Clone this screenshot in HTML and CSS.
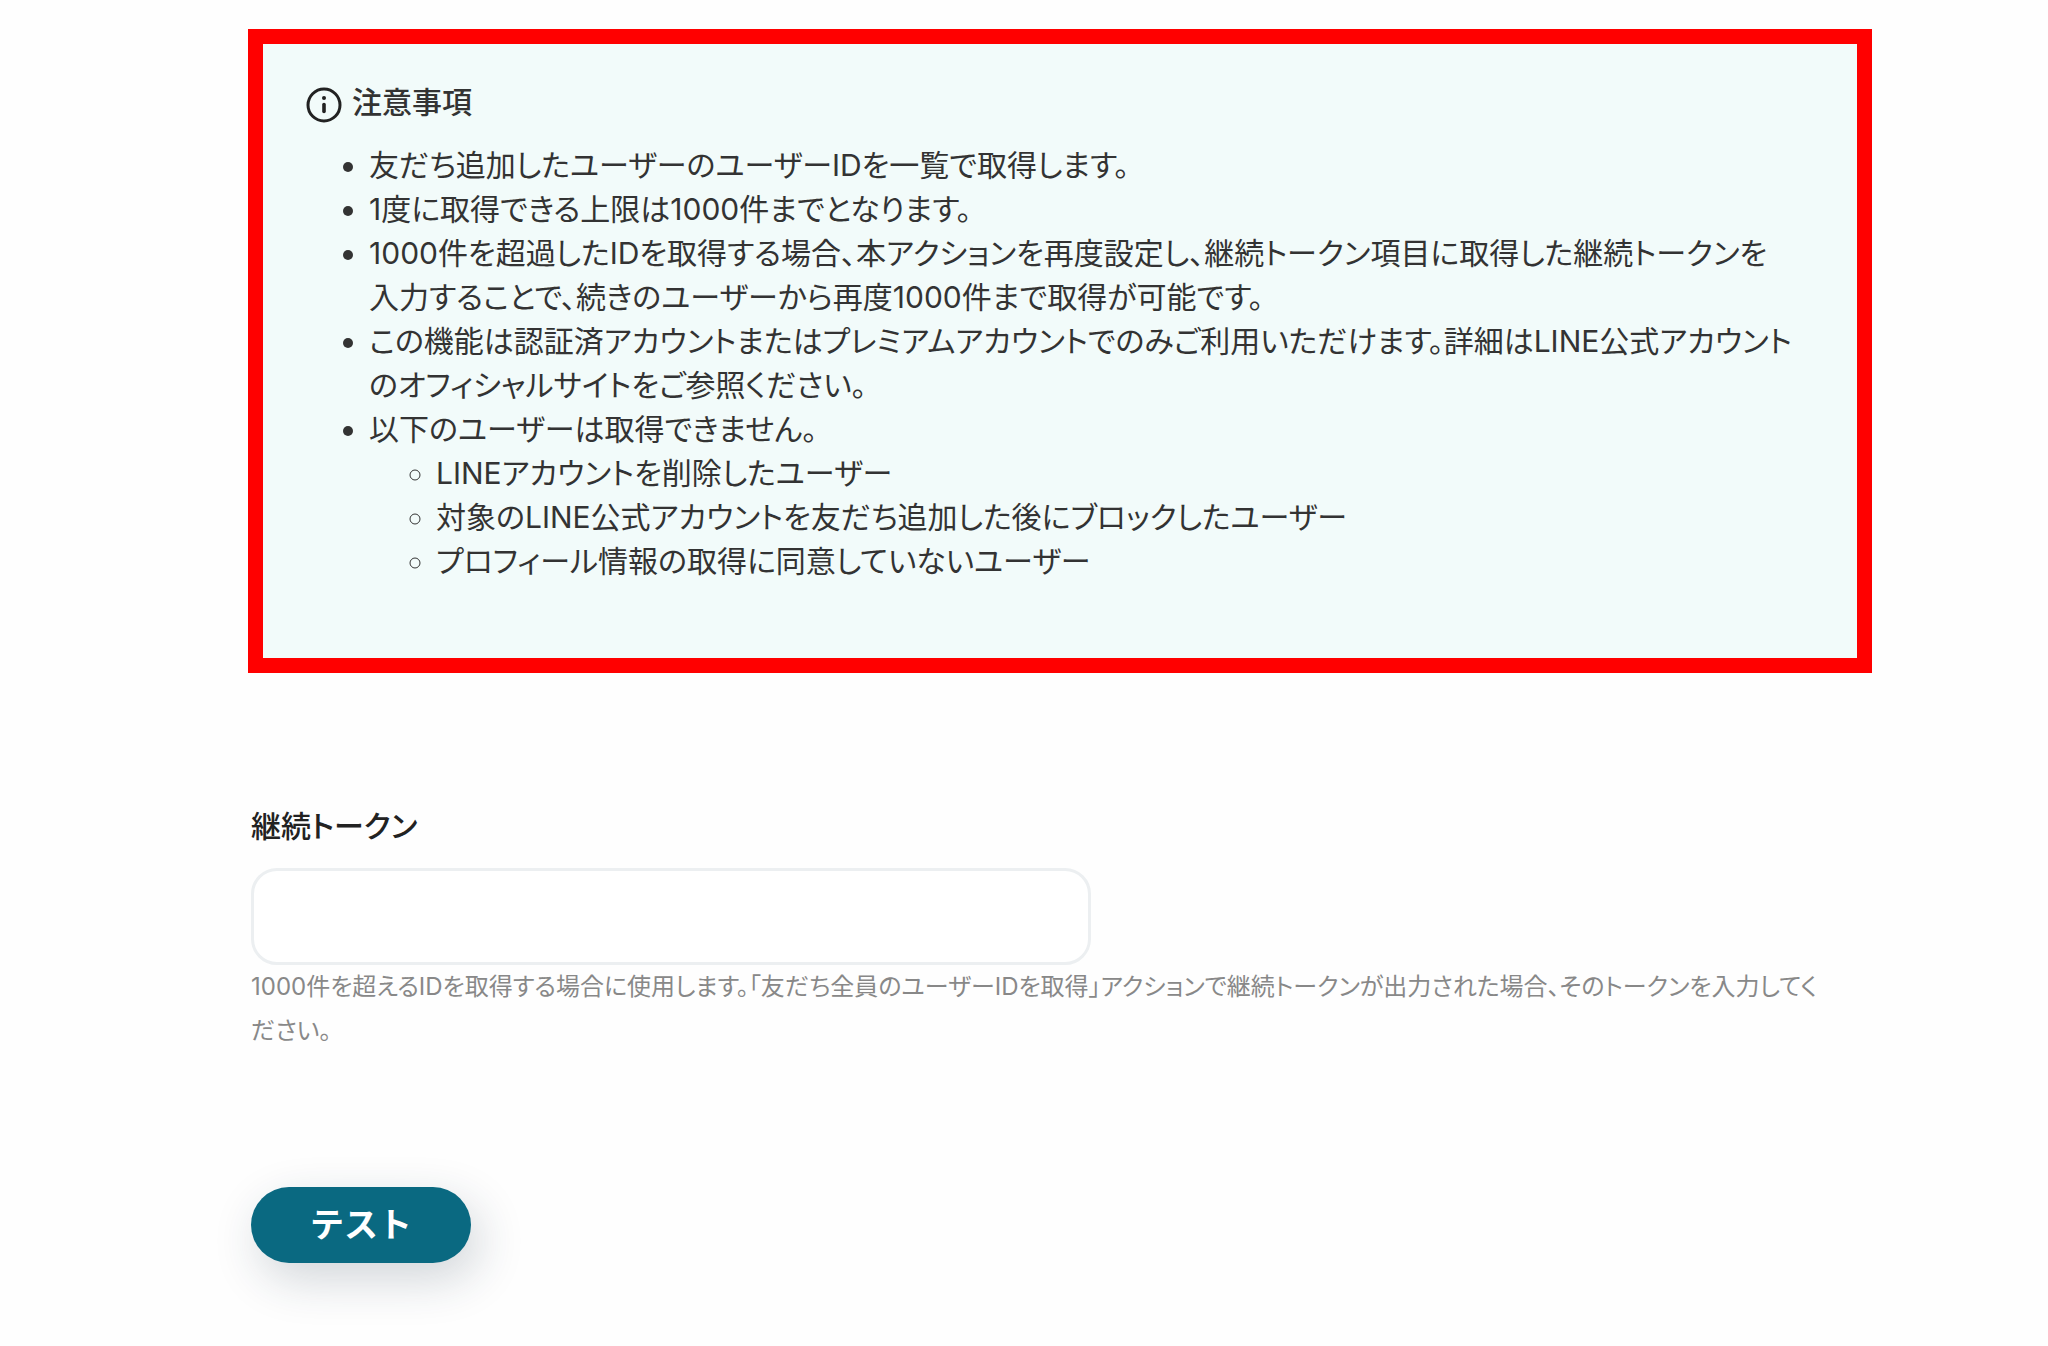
FILE: index.html
```
<!DOCTYPE html>
<html lang="ja">
<head>
    <meta charset="UTF-8">
    <meta name="viewport" content="width=device-width, initial-scale=1.0">
    <title>友だち全員のユーザーIDを取得</title>
    <link rel="stylesheet" href="styles.css">
</head>
<body>
    <main class="container">
        <section class="notice">
            <h2 class="notice-title">
                <svg class="notice-icon" viewBox="0 0 36 36" aria-hidden="true">
                    <circle cx="18" cy="17" r="16" fill="none" stroke="currentColor" stroke-width="3"/>
                    <circle cx="18" cy="10" r="2" fill="currentColor"/>
                    <path d="M18 16.5v7" stroke="currentColor" stroke-width="3.6" stroke-linecap="round"/>
                </svg>
                注意事項
            </h2>
            <ul class="notice-list">
                <li>友だち追加したユーザーのユーザーIDを一覧で取得します。</li>
                <li>1度に取得できる上限は1000件までとなります。</li>
                <li>1000件を超過したIDを取得する場合、本アクションを再度設定し、継続トークン項目に取得した継続トークンを入力することで、続きのユーザーから再度1000件まで取得が可能です。</li>
                <li>この機能は認証済アカウントまたはプレミアムアカウントでのみご利用いただけます。詳細はLINE公式アカウントのオフィシャルサイトをご参照ください。</li>
                <li>以下のユーザーは取得できません。
                    <ul>
                        <li>LINEアカウントを削除したユーザー</li>
                        <li>対象のLINE公式アカウントを友だち追加した後にブロックしたユーザー</li>
                        <li>プロフィール情報の取得に同意していないユーザー</li>
                    </ul>
                </li>
            </ul>
        </section>

        <form class="token-form">
            <label class="token-label" for="token">継続トークン</label>
            <input class="token-input" type="text" id="token" name="token" aria-describedby="tokenHelp">
            <p class="token-help" id="tokenHelp">1000件を超えるIDを取得する場合に使用します。「友だち全員のユーザーIDを取得」アクションで継続トークンが出力された場合、そのトークンを入力してください。</p>
            <button class="test-btn" type="button">テスト</button>
        </form>
    </main>
</body>
</html>
```
FILE: styles.css
```
* {
    box-sizing: border-box;
}
body {
    margin: 0;
    background-color: #fefefe;
    color: #333;
    font-family: Inter, "Noto Sans CJK JP", sans-serif;
    font-size: 30px;
    line-height: 44px;
    font-feature-settings: "palt";
}
.container {
    padding: 29px 176px 80px 248px;
}
.notice {
    padding: 36px 62px 75px 43px;
    border: 15px solid #f00;
    background-color: #f2fbfa;
}
.notice-title {
    display: flex;
    align-items: flex-end;
    gap: 10px;
    margin: 0 0 19px;
    font-size: 30px;
    font-weight: 500;
}
.notice-icon {
    width: 36px;
    height: 36px;
    color: #222;
    overflow: visible;
}
.notice-list {
    margin: 0;
    padding-left: 63px;
}
.notice-list ul {
    margin: 0;
    padding-left: 67px;
}
.token-form {
    padding: 131px 40px 0 3px;
}
.token-label {
    display: block;
    margin-bottom: 20px;
    color: #222;
    font-weight: 500;
}
.token-input {
    display: block;
    width: 100%;
    max-width: 840px;
    height: 97px;
    padding: 0 24px;
    border: 3px solid #eceff1;
    border-radius: 26px;
    background-color: #fff;
    font: inherit;
}
.token-help {
    margin: 0 0 134px;
    color: #888;
    font-size: 24px;
}
.test-btn {
    padding: 16px 59px;
    border: none;
    border-radius: 38px;
    background-color: #0a6981;
    box-shadow: 8px 16px 48px rgba(30, 50, 70, 0.2);
    color: #fff;
    font: inherit;
    font-size: 34px;
    font-weight: 700;
    font-feature-settings: normal;
    cursor: pointer;
}
```
